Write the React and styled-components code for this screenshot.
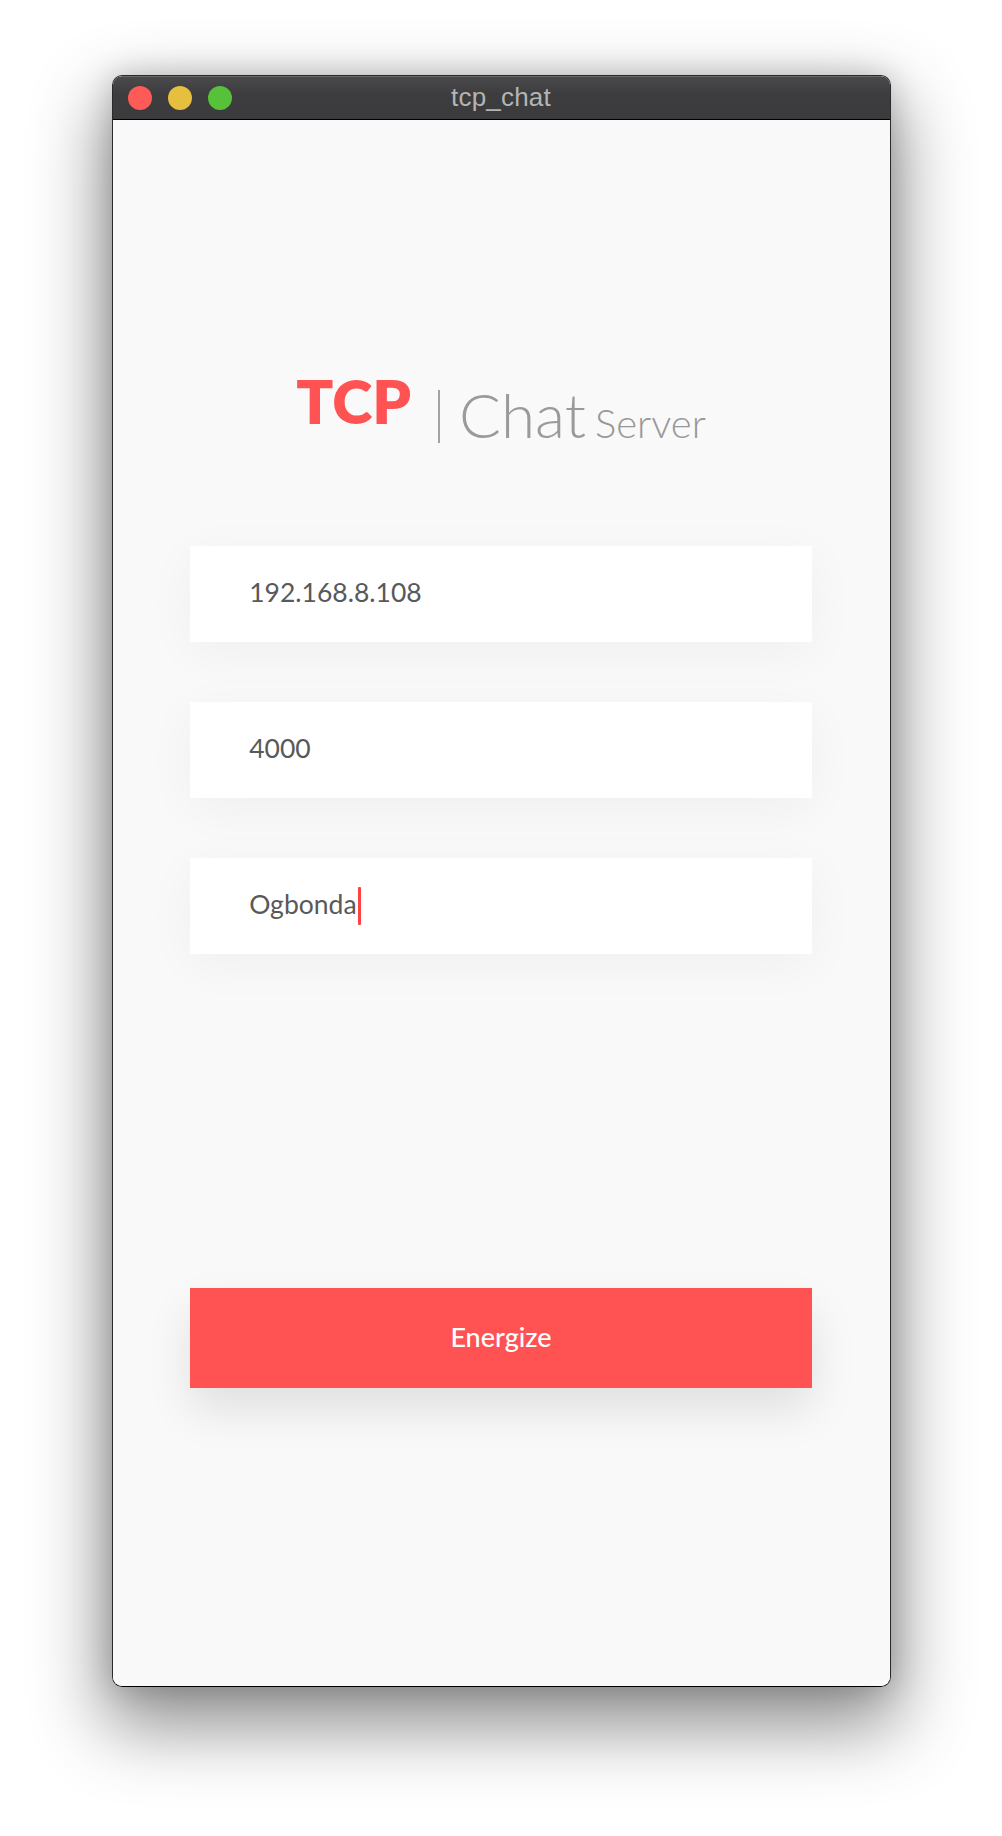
import React from 'react'
import styled, { createGlobalStyle } from 'styled-components'

const GlobalStyle = createGlobalStyle`
  html, body {
    margin: 0;
    padding: 0;
    background: #ffffff;
  }
`

const Stage = styled.div`
  display: flex;
  justify-content: center;
  padding-top: 75px;
  height: 1836px;
  box-sizing: border-box;
  overflow: hidden;
`

const Window = styled.div`
  width: 779px;
  height: 1612px;
  box-sizing: border-box;
  display: flex;
  flex-direction: column;
  border: 1px solid #2a2a2a;
  border-bottom-color: #000;
  border-radius: 10px;
  overflow: hidden;
  box-shadow: 0 32px 72px 8px rgba(0, 0, 0, 0.44), 0 0 30px rgba(0, 0, 0, 0.18);
`

const TitleBar = styled.div`
  flex: none;
  height: 42px;
  display: grid;
  grid-template-columns: 1fr auto 1fr;
  align-items: center;
  background: linear-gradient(#4a4a4c, #3d3d3f 40%, #3b3b3d);
  border-top: 1px solid #6a6a6c;
  border-bottom: 1px solid #000;
`

const Lights = styled.div`
  display: flex;
  gap: 16px;
  padding-left: 15px;
`

const Light = styled.span`
  width: 24px;
  height: 24px;
  border-radius: 50%;
  background: ${p => p.$color};
`

const Title = styled.div`
  font-family: 'Liberation Sans', Arial, sans-serif;
  font-size: 26px;
  letter-spacing: 0.2px;
  color: #b4b4b4;
  padding-bottom: 2px;
`

const Content = styled.div`
  flex: 1;
  background: #f9f9f9;
  display: flex;
  flex-direction: column;
  align-items: center;
  padding-top: 254px;
`

const Logo = styled.div`
  height: 80px;
  font-family: 'Lato', sans-serif;
  font-size: 62px;
  line-height: 80px;
  white-space: nowrap;
`

const Tcp = styled.span`
  font-size: 61px;
  font-weight: 800;
  line-height: 40px;
  color: #ff5252;
  vertical-align: 14px;
`

const Bar = styled.span`
  display: inline-block;
  width: 2px;
  height: 53px;
  margin: 0 19px 0 27px;
  background: #a3a3a3;
  vertical-align: -5px;
`

const Chat = styled.span`
  font-weight: 300;
  color: #9a9a9a;
`

const Server = styled.span`
  font-size: 40px;
  font-weight: 300;
  line-height: 1;
  color: #989898;
  margin-left: 9px;
`

const Form = styled.div`
  width: 80%;
  margin-top: 92px;
  display: flex;
  flex-direction: column;
  gap: 60px;
`

const Field = styled.div`
  height: 96px;
  box-sizing: border-box;
  display: flex;
  align-items: center;
  padding: 0 0 4px 59px;
  background: #ffffff;
  box-shadow: 0 10px 50px rgba(0, 0, 0, 0.045);
  font-family: 'Lato', sans-serif;
  font-size: 26.5px;
  color: #595959;
`

const Caret = styled.span`
  display: inline-block;
  width: 3px;
  height: 38px;
  margin: 4px 0 0 1px;
  border-radius: 1px;
  background: #ff4242;
`

const Button = styled.button`
  width: 80%;
  height: 100px;
  margin-top: 334px;
  padding-bottom: 4px;
  border: none;
  background: #ff5353;
  color: #ffffff;
  font-family: 'Lato', sans-serif;
  font-size: 27px;
  font-weight: 500;
  box-shadow: 0 22px 45px rgba(0, 0, 0, 0.1);
  cursor: pointer;
`

const fields = [
  { value: '192.168.8.108' },
  { value: '4000' },
  { value: 'Ogbonda', focused: true },
]

export default function App() {
  return (
    <Stage>
      <GlobalStyle />
      <Window>
        <TitleBar>
          <Lights>
            <Light $color="#fe5a57" />
            <Light $color="#e6bf3e" />
            <Light $color="#58c13a" />
          </Lights>
          <Title>tcp_chat</Title>
          <div />
        </TitleBar>
        <Content>
          <Logo>
            <Tcp>TCP</Tcp>
            <Bar />
            <Chat>Chat</Chat>
            <Server>Server</Server>
          </Logo>
          <Form>
            {fields.map(f => (
              <Field key={f.value}>
                {f.value}
                {f.focused && <Caret />}
              </Field>
            ))}
          </Form>
          <Button>Energize</Button>
        </Content>
      </Window>
    </Stage>
  )
}
